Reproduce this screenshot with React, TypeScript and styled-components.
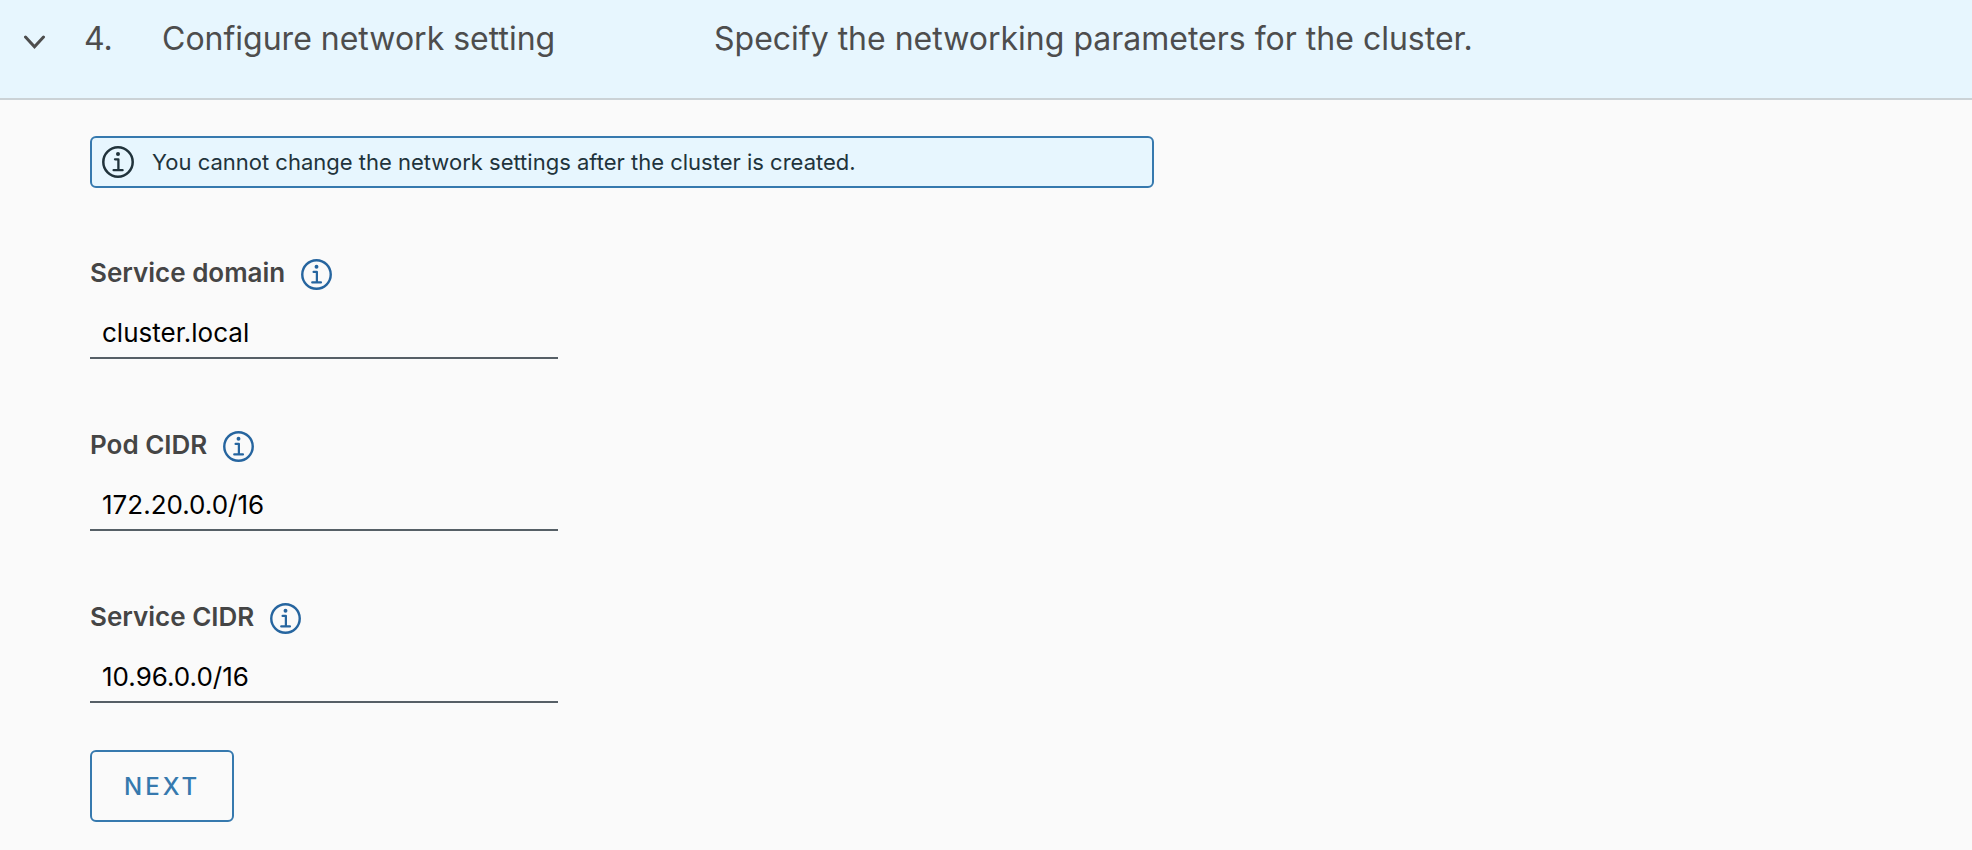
import { useState } from "react";
import styled, { createGlobalStyle } from "styled-components";

const GlobalStyle = createGlobalStyle`
  *, *::before, *::after { box-sizing: border-box; }
  body {
    margin: 0;
    background: #fafafa;
    color: #454545;
    font-family: Inter, "Liberation Sans", sans-serif;
  }
`;

const StepHeader = styled.button`
  display: flex;
  align-items: flex-start;
  width: 100%;
  min-height: 100px;
  padding: 19px 24px 0;
  border: 0;
  border-bottom: 2px solid #cbd2d6;
  background: #e7f6fe;
  color: #4d4d4d;
  font: inherit;
  font-size: 32px;
  line-height: 40px;
  text-align: left;
  cursor: pointer;
`;

const Chevron = styled.svg<{ $open: boolean }>`
  flex: none;
  width: 22px;
  height: 14px;
  margin: 16px 38px 0 0;
  transform: ${(p) => (p.$open ? "none" : "rotate(-90deg)")};
`;

const StepNumber = styled.span`
  flex: none;
  width: 78px;
`;

const StepTitle = styled.span`
  flex: 0 1 552px;
`;

const StepDescription = styled.span`
  flex: 1;
`;

const StepBody = styled.form`
  display: flex;
  flex-direction: column;
  align-items: flex-start;
  padding: 36px 90px 28px;
`;

const Alert = styled.div`
  display: flex;
  align-items: center;
  gap: 18px;
  width: 100%;
  max-width: 1064px;
  min-height: 52px;
  padding: 0 10px;
  border: 2px solid #3679ae;
  border-radius: 6px;
  background: #e7f6fe;
  color: #21333b;
  font-size: 22px;
  line-height: 28px;
`;

const InfoSvg = styled.svg<{ $size: number }>`
  display: block;
  flex: none;
  width: ${(p) => p.$size}px;
  height: ${(p) => p.$size}px;
`;

const Fields = styled.div`
  display: flex;
  flex-direction: column;
  gap: 65px;
  width: 100%;
  max-width: 468px;
  margin: 64px 0 47px;
`;

const LabelRow = styled.div`
  display: flex;
  align-items: center;
  gap: 16px;
  height: 44px;
  margin-bottom: 16px;
`;

const Label = styled.label`
  padding-bottom: 2px;
  font-size: 26px;
  font-weight: 600;
  line-height: 32px;
`;

const InfoButton = styled.button`
  padding: 0;
  border: 0;
  background: none;
  color: #26659f;
  cursor: pointer;
`;

const TextInput = styled.input`
  display: block;
  width: 100%;
  height: 47px;
  padding: 0 12px 4px;
  border: 0;
  border-bottom: 2px solid #565f66;
  border-radius: 0;
  outline: none;
  background: transparent;
  color: #000;
  font: inherit;
  font-size: 26px;
`;

const NextButton = styled.button`
  min-width: 144px;
  height: 72px;
  padding: 0 32px;
  border: 2px solid #3679ae;
  border-radius: 6px;
  background: transparent;
  color: #3679ae;
  font: inherit;
  font-size: 24px;
  font-weight: 500;
  letter-spacing: 3px;
  cursor: pointer;
`;

function InfoIcon({ size }: { size: number }) {
  return (
    <InfoSvg $size={size} viewBox="0 0 32 32" fill="none" stroke="currentColor" aria-hidden="true">
      <circle cx="16" cy="16" r="14.7" strokeWidth="2.5" />
      <circle cx="16" cy="8" r="2" fill="currentColor" stroke="none" />
      <path d="M13 13.3h3.4v10.8M11.6 24.2h9" strokeWidth="2.3" strokeLinecap="round" strokeLinejoin="round" />
    </InfoSvg>
  );
}

const fields = [
  { id: "service-domain", label: "Service domain", value: "cluster.local" },
  { id: "pod-cidr", label: "Pod CIDR", value: "172.20.0.0/16" },
  { id: "service-cidr", label: "Service CIDR", value: "10.96.0.0/16" },
];

export default function App() {
  const [open, setOpen] = useState(true);

  return (
    <>
      <GlobalStyle />
      <main>
        <StepHeader type="button" aria-expanded={open} onClick={() => setOpen(!open)}>
          <Chevron $open={open} viewBox="0 0 22 14" fill="none" stroke="currentColor" aria-hidden="true">
            <path d="M1.5 2l9 9.7 9-9.7" strokeWidth="3" strokeLinecap="round" />
          </Chevron>
          <StepNumber>4.</StepNumber>
          <StepTitle>Configure network setting</StepTitle>
          <StepDescription>Specify the networking parameters for the cluster.</StepDescription>
        </StepHeader>
        {open && (
          <StepBody onSubmit={(e) => e.preventDefault()}>
            <Alert role="note">
              <InfoIcon size={32} />
              <span>You cannot change the network settings after the cluster is created.</span>
            </Alert>
            <Fields>
              {fields.map((field) => (
                <div key={field.id}>
                  <LabelRow>
                    <Label htmlFor={field.id}>{field.label}</Label>
                    <InfoButton type="button" aria-label={`About ${field.label}`}>
                      <InfoIcon size={31} />
                    </InfoButton>
                  </LabelRow>
                  <TextInput id={field.id} type="text" defaultValue={field.value} />
                </div>
              ))}
            </Fields>
            <NextButton type="submit">NEXT</NextButton>
          </StepBody>
        )}
      </main>
    </>
  );
}
